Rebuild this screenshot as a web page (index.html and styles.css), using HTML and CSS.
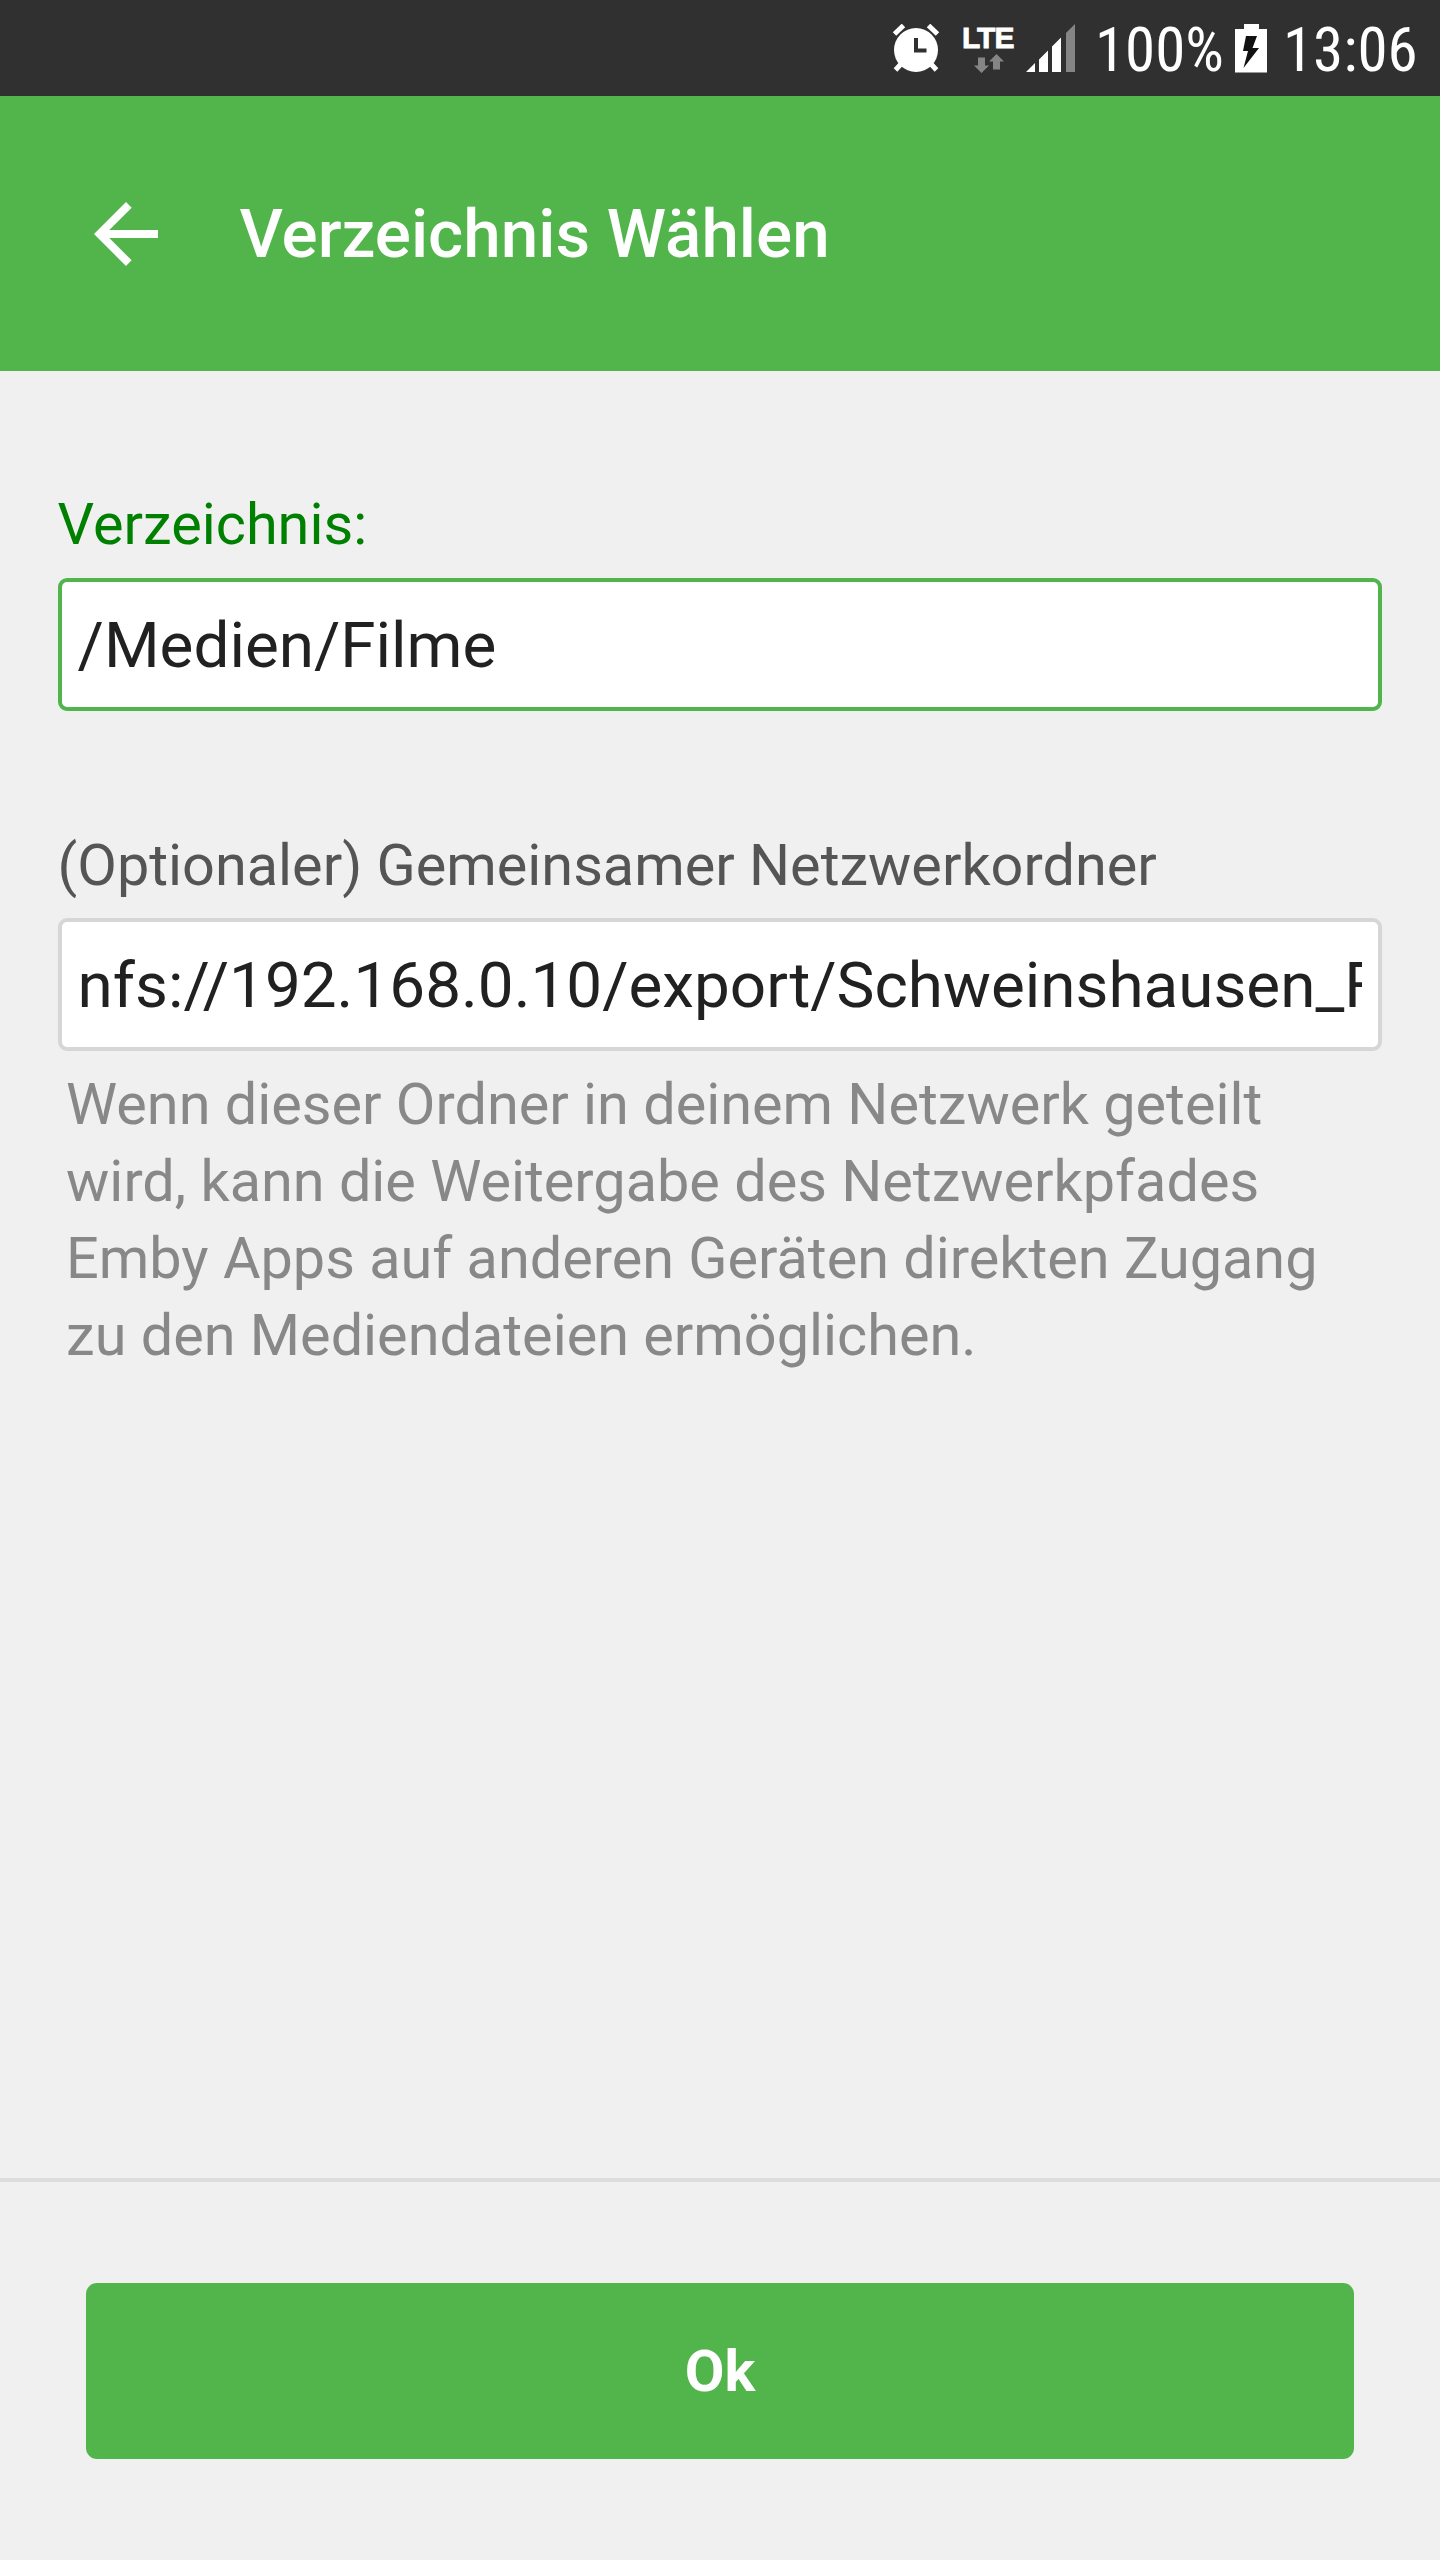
FILE: index.html
```html
<!DOCTYPE html>
<html lang="de">
<head>
<meta charset="utf-8">
<title>Verzeichnis Wählen</title>
<link rel="stylesheet" href="styles.css">
</head>
<body>
<div class="screen">
  <div class="status-bar">
    <svg class="icon-alarm" width="48" height="50" viewBox="0 0 48 50">
      <circle cx="24" cy="26" r="22" fill="#fff"/>
      <path d="M2.500 10 11.500 1.500M36.500 1.500 45.500 10" stroke="#fff" stroke-width="5"/>
      <path d="M9 40 3.500 46M39 40 44.500 46" stroke="#fff" stroke-width="5"/>
      <path d="M24 14V26.500H34.500" fill="none" stroke="#303030" stroke-width="4"/>
    </svg>
    <div class="network">
      <span class="network-type">LTE</span>
      <svg class="traffic" width="30" height="19" viewBox="0 0 30 19" fill="#858585">
        <path d="M4 3.500h7v8h4L7.500 19 0 11.500h4z"/>
        <path d="M19 15.500h7v-8h4L22.500 0 15 7.500h4z"/>
      </svg>
    </div>
    <svg class="icon-signal" width="50" height="49" viewBox="0 0 50 49">
      <path fill="#fff" d="M0 48 9 39v9zM13 35.500l9-9V48h-9zM26 22.500l9-9V48h-9z"/>
      <path fill="#858585" d="M40 9l9-9v48h-9z"/>
    </svg>
    <span class="battery-level">100%</span>
    <svg class="icon-battery" width="32" height="49" viewBox="0 0 32 49">
      <path fill="#fff" d="M9 0h15v5h8v43.500H0V5h9z"/>
      <path fill="#111" d="M11 12h11l-4.500 12H24L8.500 44 13 27H8z"/>
    </svg>
    <span class="clock">13:06</span>
  </div>
  <header class="header">
    <svg width="96" height="96" viewBox="0 0 24 24" fill="#fff"><path d="M20 11H7.830l5.590-5.590L12 4l-8 8 8 8 1.410-1.410L7.830 13H20v-2z"/></svg>
    <h1 class="title">Verzeichnis Wählen</h1>
  </header>
  <main class="content">
    <div class="field field-active">
      <label class="label">Verzeichnis:</label>
      <div class="input">/Medien/Filme</div>
    </div>
    <div class="field">
      <label class="label">(Optionaler) Gemeinsamer Netzwerkordner</label>
      <div class="input"><span class="value">nfs://192.168.0.10/export/Schweinshausen_F</span></div>
      <p class="help">Wenn dieser Ordner in deinem Netzwerk geteilt wird, kann die Weitergabe des Netzwerkpfades Emby Apps auf anderen Geräten direkten Zugang zu den Mediendateien ermöglichen.</p>
    </div>
  </main>
  <footer class="footer"><button class="submit">Ok</button></footer>
</div>
</body>
</html>
```
FILE: styles.css
```css
* { box-sizing: border-box; }
body { margin: 0; font-family: Roboto, "Liberation Sans", sans-serif; background: #f0f0f0; }
.screen { width: 1440px; height: 2560px; display: flex; flex-direction: column; overflow: hidden; }

.status-bar { height: 96px; flex: none; display: flex; align-items: flex-start; background: #303030; color: #fff; padding: 24px 0 0 892px; }
.status-bar svg { flex: none; display: block; }
.icon-alarm { margin-right: 22px; }
.network { width: 64px; display: flex; flex-direction: column; }
.network-type { font: 700 30px/30px "Liberation Sans", Arial, sans-serif; width: 54px; height: 31px; margin-top: -1px; -webkit-text-stroke: 0.8px #fff; letter-spacing: -1px; }
.network .traffic { margin-left: 12px; }
.battery-level, .clock { flex: none; font-size: 61px; line-height: 52px; font-stretch: 75%; white-space: nowrap; }
.battery-level { width: 140px; margin-left: 19px; }
.icon-battery { margin-right: 16px; }

.header { height: 275px; flex: none; display: flex; align-items: center; gap: 66px; padding-left: 77.500px; background: #52b54b; color: #fff; }
.title { margin: 0; font-size: 67.400px; line-height: 80px; font-weight: 500; }

.content { flex: 1; padding: 119px 57.600px 0; }
.field { margin-bottom: 119px; }
.label { display: block; font-size: 57.600px; line-height: 71px; margin-bottom: 17px; color: #555; }
.field-active .label { line-height: 69px; margin-bottom: 19px; color: #008000; }
.input { height: 133px; padding: 0 16px; border: 4px solid #d6d6d6; border-radius: 9px; background: #fff; color: #212121; font-size: 63.800px; line-height: 127px; white-space: nowrap; }
.field-active .input { border-color: #52b54b; }
.value { display: block; overflow: hidden; height: 125px; }
.help { margin: 15px 0 0; padding: 0 8.500px; font-size: 57.600px; line-height: 77px; color: #888; }

.footer { height: 382px; flex: none; border-top: 4px solid #ddd; padding: 101px 86px 0; }
.submit { display: block; width: 100%; height: 176px; padding: 2px 0 0; border: 0; border-radius: 11px; background: #52b54b; color: #fff; font: 700 57.600px/174px Roboto, sans-serif; }
```
